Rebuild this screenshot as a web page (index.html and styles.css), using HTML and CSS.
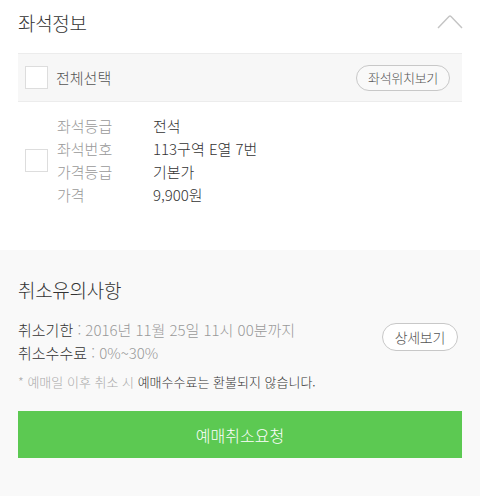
FILE: index.html
```html
<!DOCTYPE html>
<html lang="ko">
<head>
<meta charset="UTF-8" />
<meta name="viewport" content="width=device-width, initial-scale=1" />
<title>예매취소</title>
<link rel="stylesheet" href="styles.css">
</head>
<body>

<section class="seat-info">
  <div class="sec-head">
    <h2>좌석정보</h2>
    <svg class="fold" width="26" height="16" viewBox="0 0 26 16">
      <path d="M1 14 L12 2.5 Q13 1.5 14 2.5 L25 14" fill="none" stroke="#c4c4c4" stroke-width="1.4" />
    </svg>
  </div>

  <div class="select-all">
    <label class="chk-row">
      <span class="chk"></span>
      <span>전체선택</span>
    </label>
    <button class="btn-pill">좌석위치보기</button>
  </div>

  <div class="seat-item">
    <span class="chk"></span>
    <dl class="seat-detail">
      <dt>좌석등급</dt><dd>전석</dd>
      <dt>좌석번호</dt><dd>113구역 E열 7번</dd>
      <dt>가격등급</dt><dd>기본가</dd>
      <dt>가격</dt><dd>9,900원</dd>
    </dl>
  </div>
</section>

<section class="cancel-info">
  <h2>취소유의사항</h2>
  <div class="cancel-row">
    <ul class="cancel-terms">
      <li><b>취소기한</b> : 2016년 11월 25일 11시 00분까지</li>
      <li><b>취소수수료</b> : 0%~30%</li>
    </ul>
    <button class="btn-pill">상세보기</button>
  </div>
  <p class="note">* 예매일 이후 취소 시 <strong>예매수수료는 환불되지 않습니다.</strong></p>
  <button class="btn-cancel">예매취소요청</button>
</section>

</body>
</html>
```

FILE: styles.css
```css
body {
  margin: 0;
  font-family: 'Noto Sans CJK KR', 'Noto Sans', sans-serif;
  font-weight: 300;
  color: #333;
  background: #fff;
}
h2 {
  margin: 0;
  font-size: 19px;
  font-weight: 300;
  letter-spacing: -0.3px;
  color: #333;
}
.seat-info {
  padding: 0 18px;
  height: 250px;
  box-sizing: border-box;
}
.sec-head {
  display: flex;
  justify-content: space-between;
  align-items: center;
  height: 44px;
  padding-bottom: 9px;
}
.sec-head .fold {
  margin-right: -1px;
  margin-top: 0;
}
.chk {
  display: block;
  width: 21px;
  height: 21px;
  border: 1px solid #ddd;
  background: #fff;
  flex-shrink: 0;
}
.select-all {
  display: flex;
  justify-content: space-between;
  align-items: center;
  height: 47px;
  padding: 0 12px 0 7px;
  background: #f7f7f7;
  border-top: 1px solid #ececec;
  border-bottom: 1px solid #ececec;
}
.chk-row {
  display: flex;
  align-items: center;
  gap: 8px;
  font-size: 15px;
  color: #555;
}
.btn-pill {
  font-family: inherit;
  font-weight: 300;
  font-size: 13px;
  color: #555;
  letter-spacing: -0.3px;
  background: #fff;
  border: 1px solid #c8c8c8;
  border-radius: 13px;
  height: 26px;
  padding: 0 11px;
  line-height: 1;
}
.select-all .btn-pill {
  background: #f9f9f9;
}
.seat-item {
  display: flex;
  align-items: center;
  gap: 9px;
  padding: 12px 7px;
}
.seat-detail {
  margin: 0;
  display: grid;
  grid-template-columns: 96px auto;
  font-size: 15px;
  line-height: 23px;
}
.seat-detail dt {
  color: #999;
}
.seat-detail dd {
  margin: 0;
  color: #333;
}
.cancel-info {
  background: #f9f9f9;
  padding: 26px 18px 39px;
}
.cancel-row {
  display: flex;
  justify-content: space-between;
  align-items: center;
  margin-top: 15px;
}
.cancel-terms {
  list-style: none;
  margin: 0;
  padding: 0;
  font-size: 15px;
  line-height: 23px;
  color: #999;
}
.cancel-terms b {
  font-weight: 300;
  color: #333;
}
.cancel-row .btn-pill {
  height: 28px;
  border-radius: 14px;
  padding: 0 12px;
  margin-right: 4px;
  margin-top: -8px;
  font-size: 14px;
}
.note {
  margin: 8px 0 0;
  font-size: 13px;
  color: #aaa;
}
.note strong {
  font-weight: 300;
  color: #333;
}
.btn-cancel {
  display: block;
  width: 100%;
  height: 47px;
  margin-top: 20px;
  border: none;
  background: #5cc952;
  color: #fff;
  font-family: inherit;
  font-weight: 300;
  font-size: 16px;
}
```
